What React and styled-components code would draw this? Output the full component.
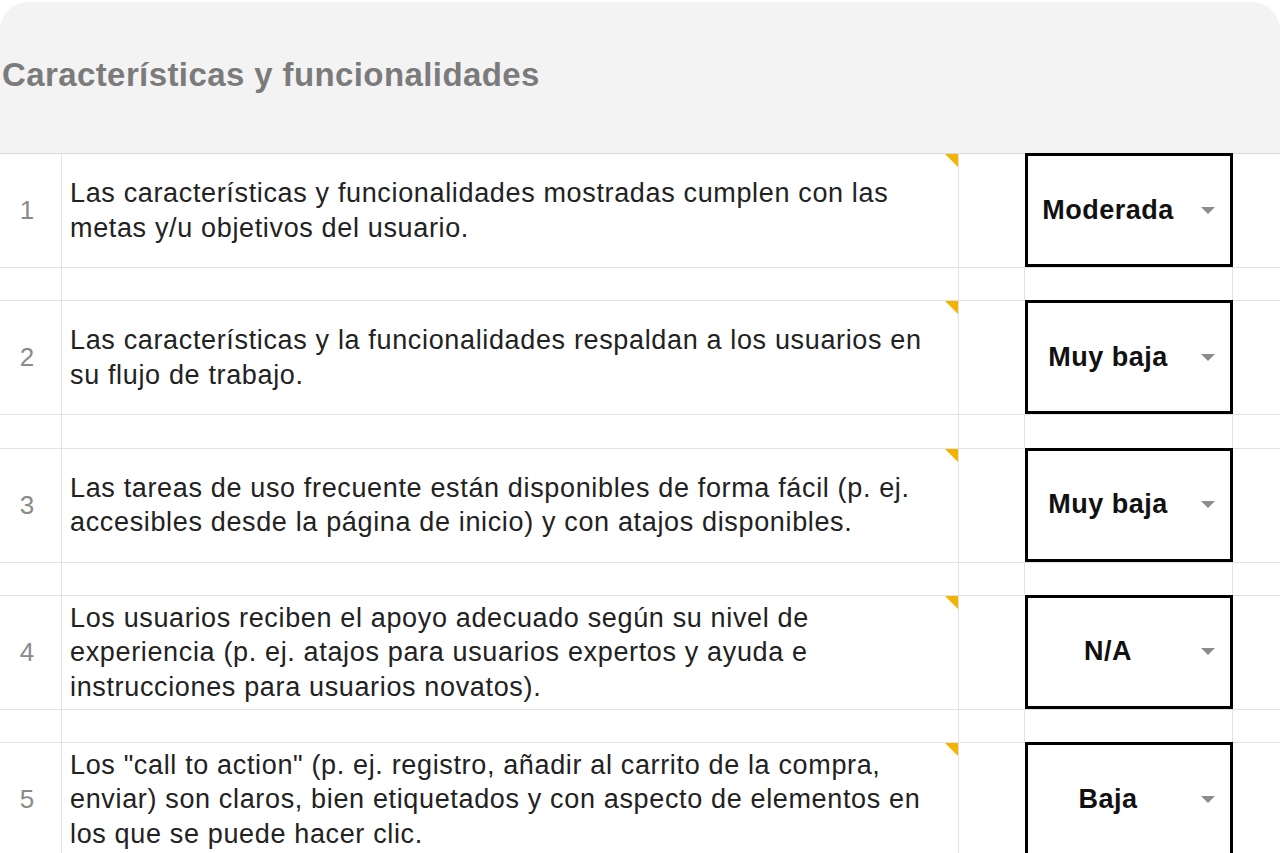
import React from "react";
import styled, { createGlobalStyle } from "styled-components";

const rows = [
  {
    n: 1,
    text: "Las características y funcionalidades mostradas cumplen con las metas y/u objetivos del usuario.",
    value: "Moderada",
  },
  {
    n: 2,
    text: "Las características y la funcionalidades respaldan a los usuarios en su flujo de trabajo.",
    value: "Muy baja",
  },
  {
    n: 3,
    text: "Las tareas de uso frecuente están disponibles de forma fácil (p. ej. accesibles desde la página de inicio) y con atajos disponibles.",
    value: "Muy baja",
  },
  {
    n: 4,
    text: "Los usuarios reciben el apoyo adecuado según su nivel de experiencia (p. ej. atajos para usuarios expertos y ayuda e instrucciones para usuarios novatos).",
    value: "N/A",
  },
  {
    n: 5,
    text: "Los \"call to action\" (p. ej. registro, añadir al carrito de la compra, enviar) son claros, bien etiquetados y con aspecto de elementos en los que se puede hacer clic.",
    value: "Baja",
  },
];

const GlobalStyle = createGlobalStyle`
  html, body {
    margin: 0;
    padding: 0;
    background: #ffffff;
    overflow: hidden;
  }
  body {
    font-family: "Liberation Sans", Arial, sans-serif;
  }
`;

const Page = styled.div`
  width: 1280px;
  height: 853px;
  overflow: hidden;
  background: #ffffff;
`;

const Header = styled.div`
  margin-top: 2px;
  height: 152px;
  background: #f3f3f3;
  border-radius: 28px 28px 0 0;
  border-bottom: 1px solid #dadada;
  display: flex;
  align-items: center;
  padding: 0 0 5px 2px;
  box-sizing: border-box;

  h1 {
    margin: 0;
    font-size: 33px;
    font-weight: 700;
    color: #7b7b7b;
    letter-spacing: 0.4px;
  }
`;

const Sheet = styled.div`
  display: grid;
  grid-template-columns: 62px 897px 66px 208px 1fr;
  grid-template-rows: repeat(4, 114px 33.3px) 114px;
`;

const Cell = styled.div`
  position: relative;
  box-sizing: border-box;
  border-bottom: 1px solid #e2e2e2;
  border-right: ${(p) => (p.$noRight ? "none" : "1px solid #e2e2e2")};
  display: flex;
  align-items: center;
`;

const Num = styled(Cell)`
  justify-content: center;
  padding-right: 7px;
  font-size: 26px;
  color: #8a8a8a;
`;

const Text = styled(Cell)`
  padding: 0 24px 0 8px;
  font-size: 27px;
  letter-spacing: 0.65px;
  line-height: 34.5px;
  color: #222222;
`;

const Note = styled.span`
  position: absolute;
  top: 0;
  right: 0;
  width: 0;
  height: 0;
  border-top: 13px solid #f2b400;
  border-left: 13px solid transparent;
`;

const Select = styled.div`
  box-sizing: border-box;
  align-self: stretch;
  height: calc(100% + 1px);
  margin-top: -1px;
  width: 100%;
  border: 3px solid #000000;
  display: flex;
  align-items: center;
  padding: 0 15px 0 3px;
  background: #ffffff;
`;

const Value = styled.span`
  flex: 1;
  text-align: center;
  font-size: 27px;
  font-weight: 700;
  letter-spacing: 0.5px;
  color: #111111;
`;

const Caret = styled.span`
  width: 0;
  height: 0;
  margin-left: 16px;
  border-left: 7px solid transparent;
  border-right: 7px solid transparent;
  border-top: 7px solid #8c8c8c;
`;

export default function App() {
  return (
    <Page>
      <GlobalStyle />
      <Header>
        <h1>Características y funcionalidades</h1>
      </Header>
      <Sheet>
        {rows.map((r, i) => (
          <React.Fragment key={r.n}>
            <Num>{r.n}</Num>
            <Text>
              {r.text}
              <Note />
            </Text>
            <Cell $noRight />
            <Cell $noRight>
              <Select>
                <Value>{r.value}</Value>
                <Caret />
              </Select>
            </Cell>
            <Cell $noRight />
            {i < rows.length - 1 && (
              <>
                <Cell />
                <Cell />
                <Cell />
                <Cell />
                <Cell $noRight />
              </>
            )}
          </React.Fragment>
        ))}
      </Sheet>
    </Page>
  );
}
